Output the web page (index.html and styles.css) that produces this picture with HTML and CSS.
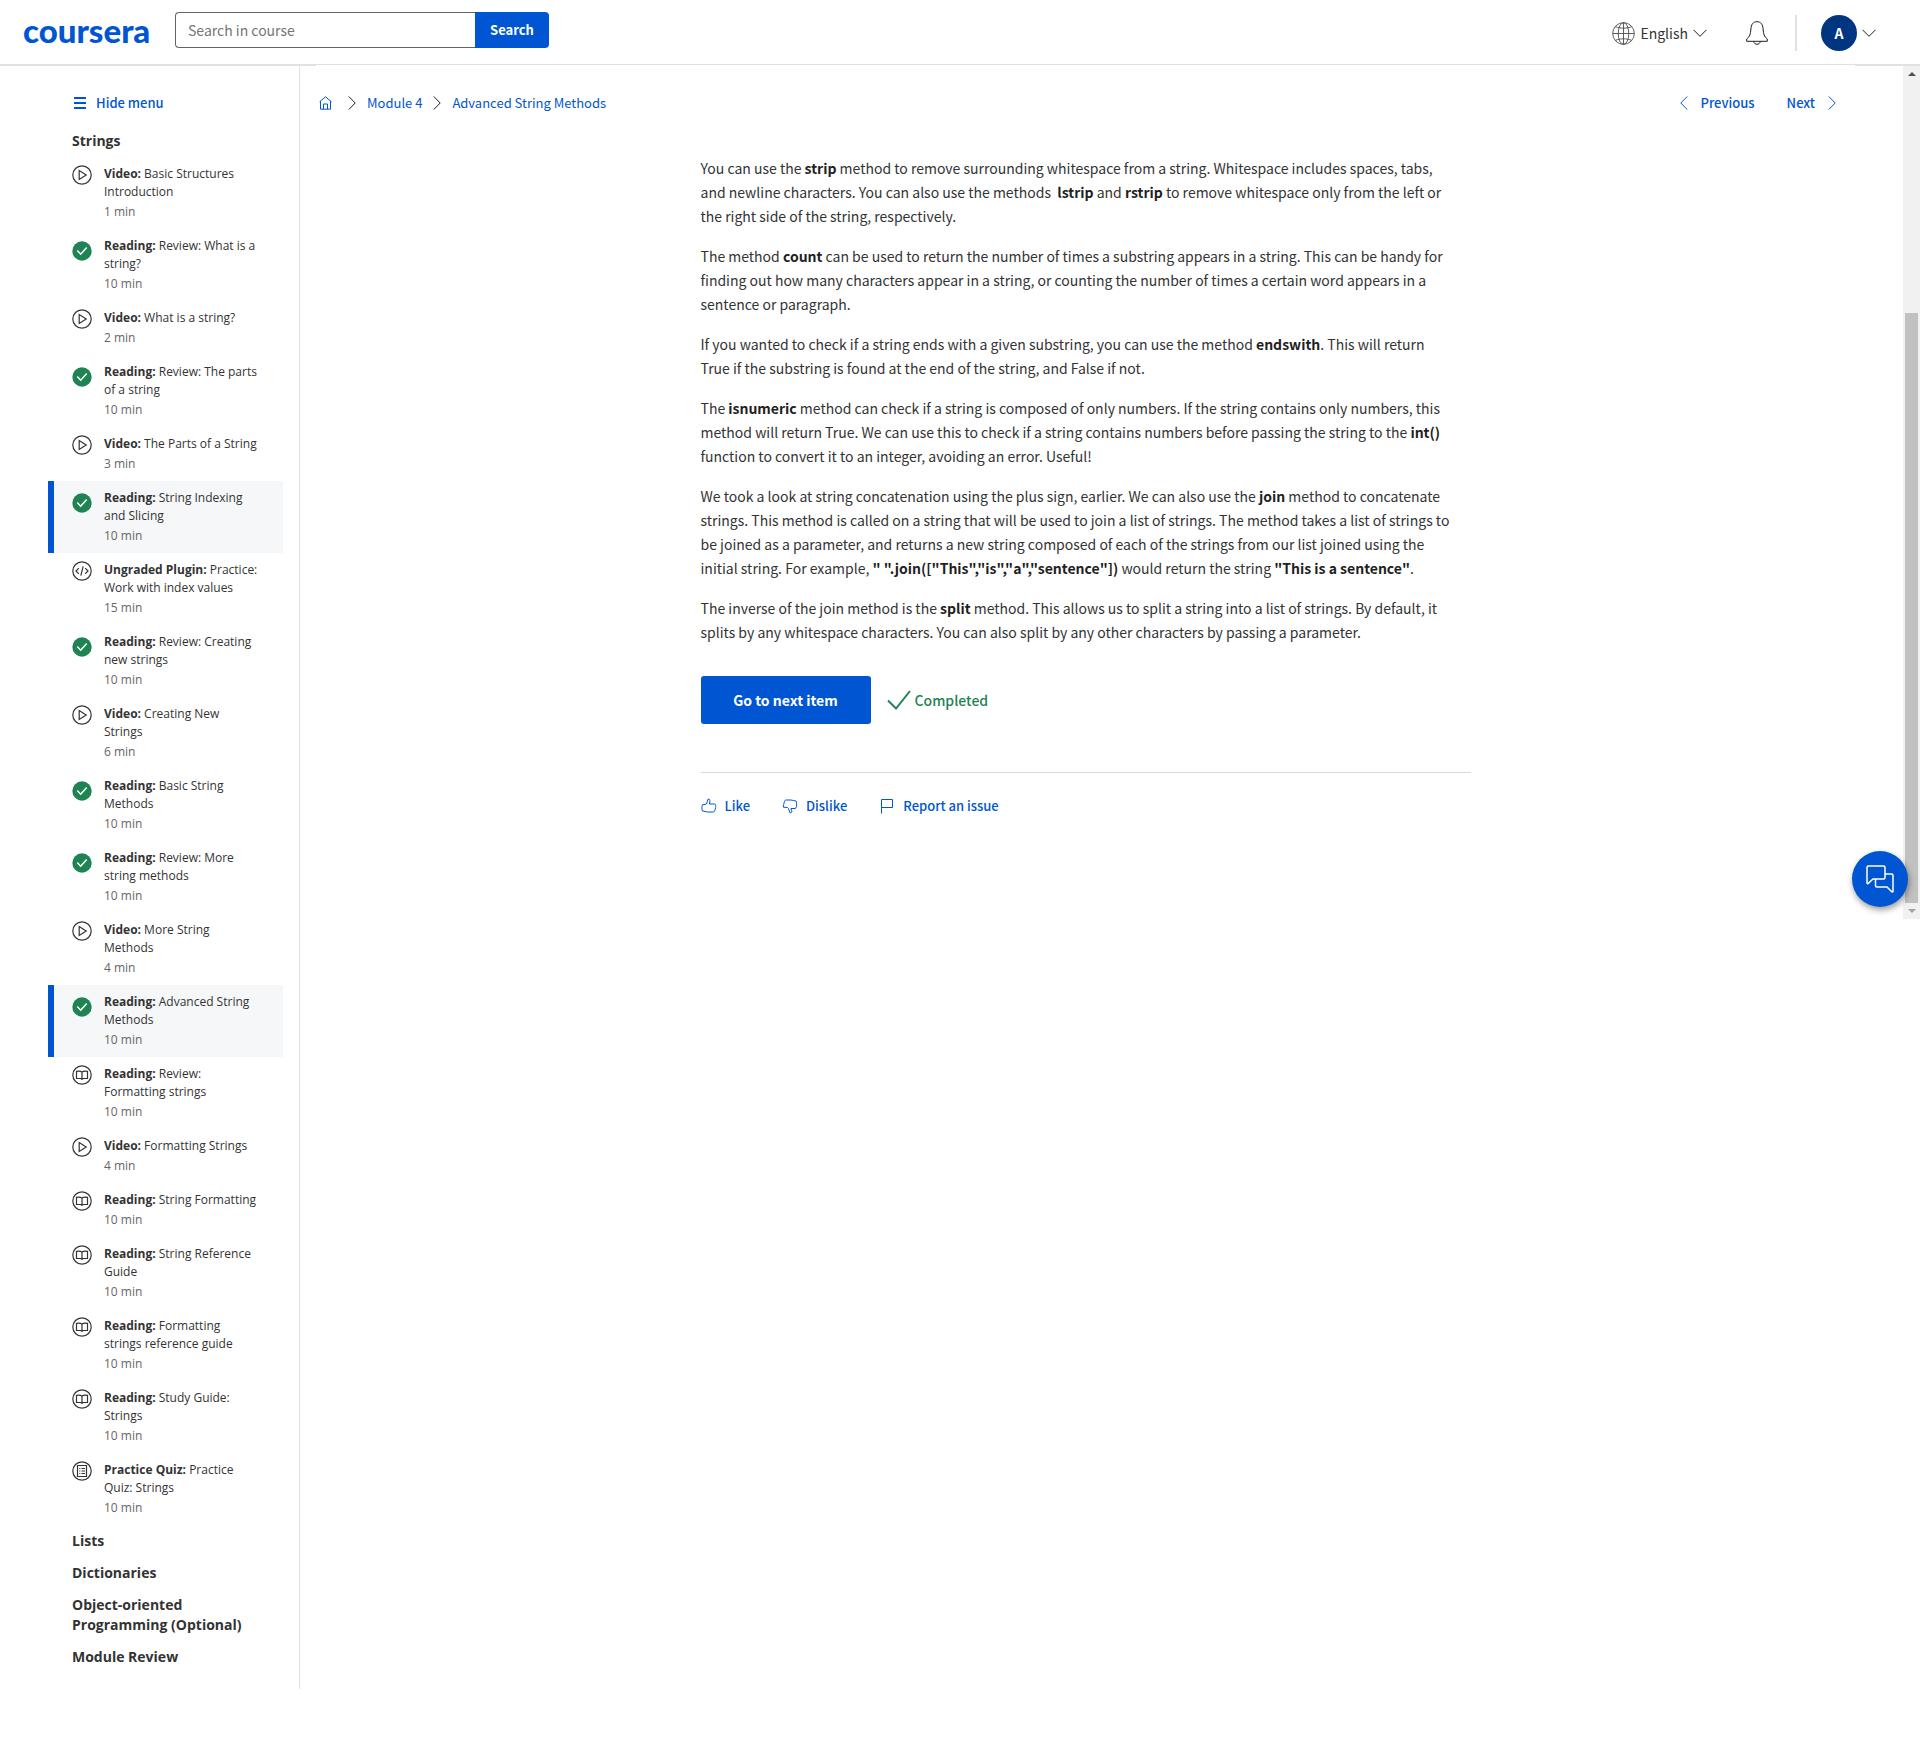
FILE: index.html
```html
<!DOCTYPE html>
<html lang="en">
<head>
<meta charset="utf-8">
<title>Advanced String Methods | Coursera</title>
<meta name="viewport" content="width=device-width, initial-scale=1">
<link rel="stylesheet" href="styles.css">
</head>
<body>
<svg class="sprite" aria-hidden="true">
  <symbol id="play" viewBox="0 0 20 20"><circle cx="10" cy="10" r="9.2"/><path d="M7.2 5.6v8.8l7-4.4z"/></symbol>
  <symbol id="done" viewBox="0 0 20 20"><circle class="disc" cx="10" cy="10" r="9.7"/><path class="tick" d="M5.3 9.6l3.4 3.6 6-6.8"/></symbol>
  <symbol id="code" viewBox="0 0 20 20"><circle cx="10" cy="10" r="9.2"/><path d="M6.8 7.2L4 10l2.8 2.8M13.2 7.2L16 10l-2.8 2.8M11.2 5.4L8.8 14.6"/></symbol>
  <symbol id="book" viewBox="0 0 20 20"><circle cx="10" cy="10" r="9.2"/><path d="M10 7.2C9 6.2 6.5 6 4.5 6.3V13.5H8.7L10 14.3 11.3 13.5H15.5V6.3C13.5 6 11 6.2 10 7.2zM10 7.2V14"/></symbol>
  <symbol id="quiz" viewBox="0 0 20 20"><circle cx="10" cy="10" r="9.2"/><path d="M5.5 4.500h9v11h-9zM7.3 7.500h1M9.5 7.500h3.500M7.3 10h1M9.5 10h3.500M7.3 12.500h1M9.5 12.500h3.500"/></symbol>
  <symbol id="right" viewBox="0 0 8 14"><path d="M.8.5L7.200 7 .8 13.500"/></symbol>
  <symbol id="left" viewBox="0 0 8 14"><path d="M7.200.5L.8 7l6.400 6.500"/></symbol>
  <symbol id="down" viewBox="0 0 14 8"><path d="M.5.8L7 7.300 13.500.8"/></symbol>
</svg>

<header class="topbar">
  <a class="logo" href="#" aria-label="Coursera home">coursera</a>
  <form class="search" role="search">
    <input type="search" placeholder="Search in course" aria-label="Search in course">
    <button type="button">Search</button>
  </form>
  <div class="account">
    <button class="language" type="button">
      <svg class="icon globe" viewBox="0 0 24 24"><circle cx="12" cy="12" r="11.300"/><ellipse cx="12" cy="12" rx="5.500" ry="11.300"/><path d="M12 .7v22.600M.7 12h22.600M3.500 4.800c5 2.200 12 2.200 17 0M3.500 19.200c5-2.200 12-2.200 17 0"/></svg>
      <span>English</span>
      <svg class="icon chevron-down"><use href="#down"/></svg>
    </button>
    <button class="bell" type="button" aria-label="Notifications">
      <svg class="icon" viewBox="0 0 22 24"><path d="M.7 20.300V18c3.300-2.500 3.800-5 4.200-10C5.300 3.500 7 .7 11 .7S16.700 3.500 17.100 8c.4 5 .9 7.500 4.200 10v2.300zM7.800 20.500c.2 3.700 6.200 3.700 6.400 0"/></svg>
    </button>
    <button class="profile" type="button" aria-label="Account menu">
      <span class="avatar">A</span>
      <svg class="icon chevron-down"><use href="#down"/></svg>
    </button>
  </div>
</header>

<div class="layout">
  <nav class="sidebar" aria-label="Course items">
    <button class="hide-menu" type="button"><svg viewBox="0 0 12 12"><path d="M0 1h12M0 6h12M0 11h12"/></svg>Hide menu</button>
    <h2>Strings</h2>
    <ul>
      <li><a class="item" href="#"><svg class="icon"><use href="#play"/></svg><span><b>Video:</b> Basic Structures Introduction<small>1 min</small></span></a></li>
      <li><a class="item complete" href="#"><svg class="icon"><use href="#done"/></svg><span><b>Reading:</b> Review: What is a string?<small>10 min</small></span></a></li>
      <li><a class="item" href="#"><svg class="icon"><use href="#play"/></svg><span><b>Video:</b> What is a string?<small>2 min</small></span></a></li>
      <li><a class="item complete" href="#"><svg class="icon"><use href="#done"/></svg><span><b>Reading:</b> Review: The parts of a string<small>10 min</small></span></a></li>
      <li><a class="item" href="#"><svg class="icon"><use href="#play"/></svg><span><b>Video:</b> The Parts of a String<small>3 min</small></span></a></li>
      <li><a class="item complete active" href="#"><svg class="icon"><use href="#done"/></svg><span><b>Reading:</b> String Indexing and Slicing<small>10 min</small></span></a></li>
      <li><a class="item" href="#"><svg class="icon"><use href="#code"/></svg><span><b>Ungraded Plugin:</b> Practice: Work with index values<small>15 min</small></span></a></li>
      <li><a class="item complete" href="#"><svg class="icon"><use href="#done"/></svg><span><b>Reading:</b> Review: Creating new strings<small>10 min</small></span></a></li>
      <li><a class="item" href="#"><svg class="icon"><use href="#play"/></svg><span><b>Video:</b> Creating New Strings<small>6 min</small></span></a></li>
      <li><a class="item complete" href="#"><svg class="icon"><use href="#done"/></svg><span><b>Reading:</b> Basic String Methods<small>10 min</small></span></a></li>
      <li><a class="item complete" href="#"><svg class="icon"><use href="#done"/></svg><span><b>Reading:</b> Review: More string methods<small>10 min</small></span></a></li>
      <li><a class="item" href="#"><svg class="icon"><use href="#play"/></svg><span><b>Video:</b> More String Methods<small>4 min</small></span></a></li>
      <li><a class="item complete active" href="#" aria-current="page"><svg class="icon"><use href="#done"/></svg><span><b>Reading:</b> Advanced String Methods<small>10 min</small></span></a></li>
      <li><a class="item" href="#"><svg class="icon"><use href="#book"/></svg><span><b>Reading:</b> Review: Formatting strings<small>10 min</small></span></a></li>
      <li><a class="item" href="#"><svg class="icon"><use href="#play"/></svg><span><b>Video:</b> Formatting Strings<small>4 min</small></span></a></li>
      <li><a class="item" href="#"><svg class="icon"><use href="#book"/></svg><span><b>Reading:</b> String Formatting<small>10 min</small></span></a></li>
      <li><a class="item" href="#"><svg class="icon"><use href="#book"/></svg><span><b>Reading:</b> String Reference Guide<small>10 min</small></span></a></li>
      <li><a class="item" href="#"><svg class="icon"><use href="#book"/></svg><span><b>Reading:</b> Formatting strings reference guide<small>10 min</small></span></a></li>
      <li><a class="item" href="#"><svg class="icon"><use href="#book"/></svg><span><b>Reading:</b> Study Guide: Strings<small>10 min</small></span></a></li>
      <li><a class="item" href="#"><svg class="icon"><use href="#quiz"/></svg><span><b>Practice Quiz:</b> Practice Quiz: Strings<small>10 min</small></span></a></li>
    </ul>
    <h2>Lists</h2>
    <h2>Dictionaries</h2>
    <h2>Object-oriented Programming (Optional)</h2>
    <h2>Module Review</h2>
  </nav>

  <div class="pane">
    <main class="content">
      <div class="crumb-row">
        <nav class="crumbs" aria-label="Breadcrumb">
          <a class="home" href="#" aria-label="Home"><svg class="icon" viewBox="0 0 13 14"><path d="M.6 5.800L6.500.8l5.900 5M1.500 5.200v8h10v-8M4.500 13V8h4v5"/></svg></a>
          <svg class="icon arrow"><use href="#right"/></svg>
          <a href="#">Module 4</a>
          <svg class="icon arrow"><use href="#right"/></svg>
          <a href="#">Advanced String Methods</a>
        </nav>
        <nav class="pager" aria-label="Course item">
          <a href="#"><svg class="icon arrow"><use href="#left"/></svg>Previous</a>
          <a href="#">Next<svg class="icon arrow"><use href="#right"/></svg></a>
        </nav>
      </div>

      <article class="reading">
        <div class="prose">
          <p>You can use the <strong>strip</strong> method to remove surrounding whitespace from a string. Whitespace includes spaces, tabs, and newline characters. You can also use the methods&nbsp; <strong>lstrip</strong> and <strong>rstrip</strong> to remove whitespace only from the left or the right side of the string, respectively.</p>
          <p>The method <strong>count</strong> can be used to return the number of times a substring appears in a string. This can be handy for finding out how many characters appear in a string, or counting the number of times a certain word appears in a sentence or paragraph.</p>
          <p>If you wanted to check if a string ends with a given substring, you can use the method <strong>endswith</strong>. This will return True if the substring is found at the end of the string, and False if not.</p>
          <p>The <strong>isnumeric</strong> method can check if a string is composed of only numbers. If the string contains only numbers, this method will return True. We can use this to check if a string contains numbers before passing the string to the <strong>int()</strong> function to convert it to an integer, avoiding an error. Useful!</p>
          <p>We took a look at string concatenation using the plus sign, earlier. We can also use the <strong>join</strong> method to concatenate strings. This method is called on a string that will be used to join a list of strings. The method takes a list of strings to be joined as a parameter, and returns a new string composed of each of the strings from our list joined using the initial string. For example, <strong>" ".join(["This","is","a","sentence"])</strong> would return the string <strong>"This is a sentence"</strong>.</p>
          <p>The inverse of the join method is the <strong>split</strong> method. This allows us to split a string into a list of strings. By default, it splits by any whitespace characters. You can also split by any other characters by passing a parameter.</p>
        </div>
        <div class="finish">
          <button class="next-item" type="button">Go to next item</button>
          <span class="completed"><svg class="icon" viewBox="0 0 24 20"><path d="M1 10.500l8 8L23 1"/></svg>Completed</span>
        </div>
        <div class="feedback">
          <button type="button"><svg class="icon" viewBox="0 0 16 16"><path d="M1.500 6.800L5.500 6 7 1.200c1.800-.3 2 .8 1.900 2L8.500 6h5.300c1 .2 1.100 1.300.7 2 .5.800.3 1.500-.2 2 .3.900.1 1.500-.5 2 0 1.300-.6 2-2 2H6.500c-2-.2-3-1-5-1-.8-2-.8-4.200 0-6.200z"/></svg>Like</button>
          <button type="button"><svg class="icon" viewBox="0 0 16 16"><path d="M1.500 9.200l4 .3 1 1L8 14.800c1.800 0 2-1 1.700-2L9 10.500h4.500c1.500-2 1.500-5 .5-7.500-2 0-3-1-5-1H4.500c-1.400 0-2 .7-2 2-.6.500-.8 1.100-.5 2-.5.500-.7 1.200-.5 3.200z"/></svg>Dislike</button>
          <button type="button"><svg class="icon" viewBox="0 0 16 16"><path d="M2.500 15.500V1.500h11v8h-11"/></svg>Report an issue</button>
        </div>
      </article>
    </main>
    <div class="scrollbar" aria-hidden="true"><span class="up"></span><span class="thumb"></span><span class="lower"></span></div>
    <button class="chat" type="button" aria-label="Chat with us">
      <svg class="icon" viewBox="0 0 28 28"><path d="M2.500 1h15q1.500 0 1.500 1.500v10q0 1.500-1.500 1.500H7l-5 4.500q-1 .5-1-1V2.500Q1 1 2.500 1zM19 9h6.500Q27 9 27 10.500v16q-.5 1-1.500 0L21 22H11q-1.500 0-1.500-1.500V14"/></svg>
    </button>
  </div>
</div>
</body>
</html>
```
FILE: styles.css
```css
:root {
  --blue: #0056d2;
  --ink: #1f1f1f;
  --text: #333;
  --line: #e1e1e1;
  --green: #1f8354;
  --ui: "Noto Sans CJK SC", "Source Sans Pro", sans-serif;
}

* { box-sizing: border-box; }

body {
  margin: 0;
  background: #fff;
  color: var(--text);
  font: 14px/24px var(--ui);
}

button {
  padding: 0;
  border: 0;
  background: none;
  color: inherit;
  font: inherit;
  cursor: pointer;
}

a { color: var(--blue); text-decoration: none; }

.sprite { display: none; }

.icon {
  flex: none;
  fill: none;
  stroke: currentColor;
  stroke-width: 1;
  overflow: visible;
}

.chevron-down { width: 14px; height: 8px; color: var(--ink); }
.arrow { width: 8px; height: 14px; }

/* Top bar */
.topbar {
  display: flex;
  align-items: flex-start;
  height: 66px;
  padding: 12px 44px 0 23px;
  background:
    linear-gradient(var(--line), var(--line)) left 0 bottom 1px / 100% 1px no-repeat,
    linear-gradient(var(--line), var(--line)) left bottom / 316px 1px no-repeat,
    linear-gradient(var(--line), var(--line)) right bottom / 65px 1px no-repeat;
}

.logo {
  width: 152px;
  font: 900 33px/36px Lato, sans-serif;
}

.search { display: flex; height: 36px; }

.search input {
  width: 300px;
  padding: 0 12px;
  border: 1px solid #636363;
  border-right: 0;
  border-radius: 4px 0 0 4px;
  font: 14px/24px var(--ui);
  appearance: none;
}

.search input::placeholder { color: #757575; }

.search button {
  width: 74px;
  border-radius: 0 4px 4px 0;
  background: var(--blue);
  color: #fff;
  font-size: 13px;
  font-weight: 700;
}

.account {
  display: flex;
  align-items: center;
  height: 42px;
  margin-left: auto;
}

.language { display: flex; align-items: center; gap: 5px; }
.globe { width: 23px; height: 23px; color: #555; }
.bell { display: flex; margin: 0 27px 0 39px; color: var(--ink); }
.bell .icon { width: 22px; height: 24px; }

.profile {
  display: flex;
  align-items: center;
  gap: 5px;
  height: 36px;
  padding-left: 24px;
  border-left: 2px solid var(--line);
}

.avatar {
  width: 36px;
  border-radius: 50%;
  background: #003581;
  color: #fff;
  font-weight: 700;
  line-height: 36px;
}

/* Course outline */
.layout { display: flex; align-items: flex-start; }

.sidebar {
  flex: none;
  width: 300px;
  padding: 25px 16px 16px 48px;
  border-right: 1px solid var(--line);
  font-family: "Open Sans", sans-serif;
}

.hide-menu {
  display: flex;
  align-items: center;
  gap: 10px;
  margin: 0 0 10px 26px;
  color: var(--blue);
  font: 500 13px/24px var(--ui);
}

.hide-menu svg { width: 12px; height: 12px; stroke: currentColor; stroke-width: 2; }

.sidebar h2 {
  margin: 0;
  padding: 6px 24px;
  color: var(--text);
  font-size: 14px;
  font-weight: 700;
  line-height: 20px;
}

.sidebar ul { margin: 0; padding: 0; list-style: none; }

.item {
  display: flex;
  gap: 12px;
  padding: 8px 24px 8px 18px;
  border-left: 6px solid transparent;
  color: var(--text);
  font-size: 12px;
  line-height: 18px;
}

.item .icon { width: 20px; height: 20px; stroke-width: 1.2; }
.item.complete .icon { margin-top: 4px; }
.item b { font-weight: 700; }
.item small { display: block; margin-top: 2px; color: #666; font-size: 12px; }
.item.active { border-color: var(--blue); background: #f5f7f8; }

.disc { fill: var(--green); stroke: none; }
.tick { stroke: #fff; stroke-width: 1.5; }

/* Reading pane */
.pane {
  position: relative;
  display: flex;
  flex: 1;
  min-height: 853px;
}

.content { flex: 1; min-width: 0; }

.crumb-row {
  display: flex;
  justify-content: space-between;
  padding: 25px 67px 0 19px;
}

.crumbs, .pager a { display: flex; align-items: center; }
.crumbs { gap: 11px; font-size: 13px; }
.crumbs .arrow { color: var(--ink); }
.crumbs .home { display: flex; margin-right: 5px; }
.home .icon { width: 13px; height: 14px; }
.pager { display: flex; gap: 32px; font-size: 13px; font-weight: 500; }
.pager a { gap: 13px; }

.reading {
  max-width: 802px;
  margin: 41px auto 0;
  padding-right: 32px;
}

.prose { padding-right: 18px; }
.prose p { margin: 0 0 16px; }
.prose strong { color: var(--ink); font-weight: 700; }

.finish {
  display: flex;
  align-items: center;
  gap: 16px;
  padding: 16px 0 48px;
  border-bottom: 1px solid #d9d9d9;
}

.next-item {
  width: 170px;
  height: 48px;
  border-radius: 3px;
  background: var(--blue);
  color: #fff;
  font-weight: 700;
}

.completed { display: flex; align-items: center; gap: 4px; color: var(--green); font-weight: 500; }
.completed .icon { width: 24px; height: 20px; stroke-width: 2; }

.feedback {
  display: flex;
  gap: 32px;
  padding-top: 21px;
  color: var(--blue);
  font-size: 13px;
  font-weight: 500;
}

.feedback button { display: flex; align-items: center; gap: 8px; }
.feedback .icon { width: 16px; height: 16px; }

.scrollbar {
  display: flex;
  flex: none;
  flex-direction: column;
  align-items: center;
  width: 17px;
  height: 853px;
  padding: 6px 0;
  background: #f1f1f1;
}

.up, .lower { border: 4px solid transparent; }
.up { border-top: 0; border-bottom-color: #505050; }
.lower { margin-top: 6px; border-bottom: 0; border-top-color: #a3a3a3; }
.thumb { width: 13px; height: 590px; margin-top: auto; background: #c1c1c1; }

.chat {
  position: absolute;
  right: 12px;
  bottom: 12px;
  display: grid;
  place-items: center;
  width: 56px;
  height: 56px;
  border-radius: 50%;
  background: var(--blue);
  box-shadow: 1px 3px 6px rgba(0, 0, 0, .4);
  color: #fff;
}

.chat .icon { width: 28px; height: 28px; stroke-width: 1.5; }
```
